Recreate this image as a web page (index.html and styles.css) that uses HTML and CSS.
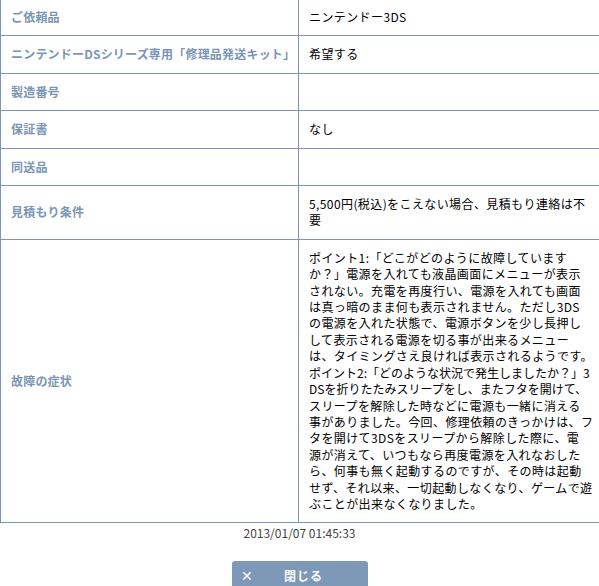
FILE: index.html
```html
<!DOCTYPE html>
<html lang="ja">
<head>
<meta charset="utf-8">
<title>修理依頼詳細</title>
<link rel="stylesheet" href="styles.css">
</head>
<body>
<div class="detail">
  <div class="label first">ご依頼品</div>
  <div class="value first">ニンテンドー3DS</div>

  <div class="label">ニンテンドーDSシリーズ専用「修理品発送キット」</div>
  <div class="value">希望する</div>

  <div class="label">製造番号</div>
  <div class="value"></div>

  <div class="label">保証書</div>
  <div class="value">なし</div>

  <div class="label">同送品</div>
  <div class="value"></div>

  <div class="label">見積もり条件</div>
  <div class="value">5,500円(税込)をこえない場合、見積もり連絡は不<br>要</div>

  <div class="label">故障の症状</div>
  <div class="value">ポイント1:「どこがどのように故障しています<br>か？」電源を入れても液晶画面にメニューが表示<br>されない。充電を再度行い、電源を入れても画面<br>は真っ暗のまま何も表示されません。ただし3DS<br>の電源を入れた状態で、電源ボタンを少し長押し<br>して表示される電源を切る事が出来るメニュー<br>は、タイミングさえ良ければ表示されるようです。<br><span class="tight">ポイント2:「どのような状況で発生しましたか？」3</span><br><span class="tight">DSを折りたたみスリープをし、またフタを開けて、</span><br>スリープを解除した時などに電源も一緒に消える<br>事がありました。今回、修理依頼のきっかけは、フ<br>タを開けて3DSをスリープから解除した際に、電<br>源が消えて、いつもなら再度電源を入れなおした<br>ら、何事も無く起動するのですが、その時は起動<br>せず、それ以来、一切起動しなくなり、ゲームで遊<br>ぶことが出来なくなりました。</div>
</div>

<p class="stamp">2013/01/07 01:45:33</p>

<div class="actions">
  <button class="close-btn" type="button"><span class="x">✕</span><span class="txt">閉じる</span></button>
</div>
</body>
</html>
```

FILE: styles.css
```css
html, body {
  margin: 0;
  padding: 0;
  background: #ffffff;
  overflow: hidden;
}

body {
  width: 599px;
  font-family: "Noto Sans CJK JP", "Liberation Sans", sans-serif;
  font-size: 12px;
  line-height: 16.4px;
  color: #000;
}

.detail {
  display: grid;
  grid-template-columns: 299px 300px;
}

.label,
.value {
  display: flex;
  align-items: center;
  padding: 10px 2px 10px 10px;
  border-bottom: 1px solid #7b96b4;
  white-space: nowrap;
}

.label {
  border-left: 1px solid #7b96b4;
  border-right: 1px solid #7b96b4;
  color: #7b95b4;
  font-weight: bold;
  letter-spacing: 0.2px;
}

.label.first,
.value.first {
  padding-top: 9px;
}

.value {
  display: block;
  align-self: stretch;
  padding-left: 10px;
  letter-spacing: 0.4px;
}

.value .tight {
  letter-spacing: 0;
}

.stamp {
  margin: 1px 0 0;
  text-align: center;
  color: #444;
  font-size: 12px;
  line-height: 18px;
}

.actions {
  display: flex;
  justify-content: center;
  padding-top: 19px;
  padding-left: 1px;
}

.close-btn {
  width: 136px;
  height: 30px;
  border: 0;
  border-radius: 3px;
  background: #7e99b7;
  color: #fff;
  font-family: "Noto Sans CJK JP", "Liberation Sans", sans-serif;
  font-size: 12px;
  font-weight: bold;
  display: flex;
  align-items: flex-start;
  padding: 6px 0 0 9px;
  cursor: pointer;
}

.close-btn .x {
  width: 43px;
  text-align: left;
  font-size: 14px;
  line-height: 16px;
  font-weight: normal;
}

.close-btn .txt {
  letter-spacing: 1px;
}
```
